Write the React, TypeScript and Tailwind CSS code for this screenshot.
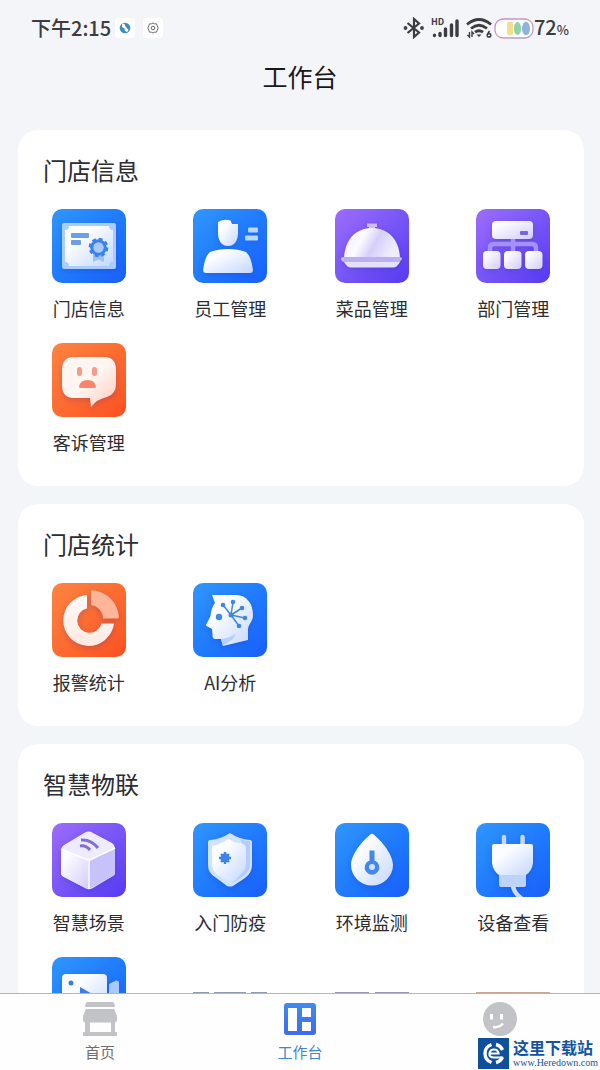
import React, {ReactNode} from 'react'

type Tone = 'blue' | 'purple' | 'orange'

interface Entry {
    label: string
    tone: Tone
    icon: ReactNode
}

const tones: Record<Tone, string> = {
    blue: 'bg-linear-to-br from-[#3096fd] to-[#1a5efb]',
    purple: 'bg-linear-to-br from-[#9d6cfb] to-[#5639f2]',
    orange: 'bg-linear-to-br from-[#fe8440] to-[#fb4f20]',
}

// shared gradients for the white shapes
function Gradients() {
    return (
        <svg width="0" height="0" className="absolute" aria-hidden="true">
            <defs>
                <linearGradient id="gBlue" x1="0" y1="0" x2="1" y2="1">
                    <stop offset="0.3" stopColor="#fcfdff"/>
                    <stop offset="1" stopColor="#c3d7fe"/>
                </linearGradient>
                <linearGradient id="gPurple" x1="0" y1="0" x2="1" y2="1">
                    <stop offset="0.2" stopColor="#fdfcff"/>
                    <stop offset="1" stopColor="#d3cbfd"/>
                </linearGradient>
                <linearGradient id="gOrange" x1="0" y1="0" x2="1" y2="1">
                    <stop offset="0.5" stopColor="#fff5f1"/>
                    <stop offset="1" stopColor="#ffc9b8"/>
                </linearGradient>
                <linearGradient id="gRing" x1="0" y1="0" x2="0" y2="1">
                    <stop offset="0" stopColor="#fffaf8"/>
                    <stop offset="1" stopColor="#ffe9e2"/>
                </linearGradient>
                <linearGradient id="gDome" x1="0" y1="0" x2="1" y2="0.3">
                    <stop offset="0" stopColor="#f1eeff"/>
                    <stop offset="0.4" stopColor="#fbfaff"/>
                    <stop offset="0.65" stopColor="#d6cffa"/>
                    <stop offset="1" stopColor="#efecff"/>
                </linearGradient>
                <linearGradient id="gTab" x1="0" y1="0" x2="0" y2="1">
                    <stop offset="0" stopColor="#3f8bee"/>
                    <stop offset="1" stopColor="#3f6bec"/>
                </linearGradient>
                <linearGradient id="gCell" x1="0" y1="0" x2="1" y2="1">
                    <stop offset="0" stopColor="#c08ad0"/>
                    <stop offset="0.5" stopColor="#d99bb0"/>
                    <stop offset="1" stopColor="#a79bd8"/>
                </linearGradient>
            </defs>
        </svg>
    )
}

const storeIcon = <>
    <rect x="10" y="14" width="54" height="46" rx="2" fill="#a9cdfe"/>
    <path d="M17 17H57A4 4 0 0 0 61 21V53A4 4 0 0 0 57 57H17A4 4 0 0 0 13 53V21A4 4 0 0 0 17 17Z" fill="url(#gBlue)"/>
    <rect x="19" y="24" width="18" height="5" rx="1" fill="#6b9fe6"/>
    <rect x="19" y="31" width="10" height="5" rx="1" fill="#6b9fe6"/>
    <path d="M41 45H52V53L46.500 50.500 41 53Z" fill="#9cc0fb"/>
    <circle cx="46.500" cy="38.500" r="8.300" fill="#3b82ec"/>
    <circle cx="46.500" cy="38.500" r="8.600" fill="none" stroke="#3b82ec" strokeWidth="2.500" strokeDasharray="3.800 2.950"/>
    <circle cx="46.500" cy="38.500" r="5.200" fill="#a9cbfb"/>
</>

const staffIcon = <>
    <path d="M25 13Q31 9.500 37.500 11.500L39 15 45 15V25Q44 37 35 37 26 37 25 25Z" fill="url(#gBlue)"/>
    <path d="M10 61Q12 47 17 43 25 40 35 40T53 43Q58 47 60 61 60 64 57 64H13Q10 64 10 61Z" fill="url(#gBlue)"/>
    <rect x="55" y="18.500" width="10" height="5" rx="1" fill="#b9d6fe"/>
    <rect x="52" y="26.500" width="13" height="5" rx="1" fill="#b9d6fe"/>
</>

const dishIcon = <>
    <path d="M32 14.500H42V18H40V21H34V18H32Z" fill="#cbbdfc"/>
    <path d="M6 49.500Q6 48 9 48H64Q67 48 67 49.500T64 53H9Q6 52 6 49.500Z" fill="#c9bcfb"/>
    <path d="M9 49C10 29 22 19 37 19S64 29 65 49Z" fill="url(#gDome)"/>
    <path d="M9 48H65V53H9Z" fill="#bdb0f2"/>
    <path d="M9 53H65Q62 58.500 58 58.500H16Q12 58.500 9 53Z" fill="#e6e0ff"/>
</>

const deptIcon = <>
    <path d="M37 30V43M14 43V39Q14 35 18 35H56Q60 35 60 39V43" fill="none" stroke="#a391fa" strokeWidth="4.500"/>
    <rect x="16" y="12" width="41" height="18" rx="4" fill="url(#gPurple)"/>
    <rect x="44" y="22" width="8" height="4" rx="1" fill="#7b63dc"/>
    <rect x="7" y="42" width="17.500" height="18" rx="4" fill="url(#gPurple)"/>
    <rect x="28" y="42" width="17.500" height="18" rx="4" fill="url(#gPurple)"/>
    <rect x="49" y="42" width="17.500" height="18" rx="4" fill="url(#gPurple)"/>
</>

const complaintIcon = <>
    <path d="M22 14H52Q64 14 64 27V41Q64 51 55 54 45 56 39 64L38 55H22Q10 55 10 42V27Q10 14 22 14Z" fill="url(#gOrange)"/>
    <rect x="25" y="24" width="5" height="9" rx="2.500" fill="#f79c84"/>
    <rect x="40" y="24" width="5" height="9" rx="2.500" fill="#f79c84"/>
    <path d="M27 44Q28 37 35.500 37T44 44Q44 45 42 45H29Q27 45 27 44Z" fill="#f6866c"/>
</>

const alarmIcon = <>
    <path d="M35 12V25.500A12.300 12.300 0 1 0 49.500 40.500H62A25.500 25.500 0 1 1 35 12Z" fill="url(#gRing)"/>
    <path d="M39 8.500Q39 7 41 7.200A29 29 0 0 1 67 34Q67 35.500 65 35.500H51A14 14 0 0 0 39 22Z" fill="#ffb597"/>
</>

const aiIcon = <>
    <path d="M19 12H43C54 12 60 21 60 32 60 39 55 41 55 47V57L30 63 28 56H22Q19 56 19.500 51L19 46 13.500 43Q12.500 42 14 40L17.500 33Q18 25 22 20Z" fill="url(#gBlue)"/>
    <path d="M28 56Q38 55 43 50L40 56 30 63Z" fill="#b5cefa"/>
    <circle cx="26" cy="34" r="3.200" fill="#3b8ae6"/>
    <path d="M38 32L30 22M38 32L40 19M38 32L49 25M38 32L52 35M38 32L46 43" stroke="#3f86df" strokeWidth="1.500"/>
    <g fill="#3f86df">
        <circle cx="38" cy="32" r="2.500"/><circle cx="30" cy="22" r="2.300"/>
        <circle cx="40" cy="19" r="2.300"/><circle cx="49" cy="25" r="2.300"/>
        <circle cx="52" cy="35" r="2.300"/><circle cx="46" cy="43" r="2.300"/>
    </g>
</>

const sceneIcon = <>
    <path d="M33 9.500Q37 7.500 41 10L60 20Q63 22 63 25V50Q63 52 60 53.500L40 65.500Q37 67 34 65.500L11 53.500Q9 52 9 50V27Q9 24 12 22Z" fill="#eeebff"/>
    <path d="M9 27L36.500 38V66.500L11 53.500Q9 52 9 50Z" fill="url(#gPurple)"/>
    <path d="M37.500 38L63 25V50Q63 52 60 53.500L37.500 66Z" fill="#c8c2fb"/>
    <path d="M9 26L37 37.500 63 25" fill="none" stroke="#fff" strokeWidth="1.500"/>
    <path d="M37 37V66" stroke="#f7f5ff" strokeWidth="1.500"/>
    <path d="M29 17Q39 16 46 25" fill="none" stroke="#7f70d2" strokeWidth="3"/>
    <path d="M28 23Q34 22 38 27" fill="none" stroke="#7f70d2" strokeWidth="3"/>
</>

const shieldIcon = <>
    <path d="M37 10Q46 16 57 17 59 17 59 20V42Q59 50 52 55L40 63Q37 64 34 63L22 54Q15 50 15 42V20Q15 17 17 17 28 16 37 10Z" fill="#cfe2ff"/>
    <path d="M47 16Q52 18 57 18V42Q56 50 49 54L37 62Q51 51 51 40V23Z" fill="#b3cdfc"/>
    <path d="M35 16Q42 20 50 21 53 22 53 25V40Q53 48 46 53L36 59 25 52Q19 48 19 40V23Q28 21 35 16Z" fill="url(#gBlue)"/>
    <circle cx="32" cy="35" r="4.500" fill="#3c84e6"/>
    <path d="M32 29V41M26 35H38M28 31L36 39M36 31L28 39" stroke="#3c84e6" strokeWidth="2.400"/>
</>

const dropIcon = <>
    <path d="M37 10.500C43 14 58 30 58 42A21 20.500 0 0 1 16 42C16 30 31 14 37 10.500Z" fill="url(#gBlue)"/>
    <path d="M34.500 27.500H39.500V37.500A7.300 7.300 0 1 1 34.500 37.500Z" fill="#4387ec"/>
    <circle cx="37" cy="44" r="3" fill="#cfe1fd"/>
</>

const plugIcon = <>
    <path d="M28 22V14M46.500 22V14" stroke="#bfd6fe" strokeWidth="4.500" strokeLinecap="round"/>
    <path d="M37 63Q38 70 46 76" fill="none" stroke="#c7dcff" strokeWidth="4.500"/>
    <path d="M23 50H50V62Q50 64 48 64H25Q23 64 23 62Z" fill="#bcd3fd"/>
    <path d="M18 21H55Q57 21 57 23V40Q56 48 50 52H23Q17 48 16 40V23Q16 21 18 21Z" fill="url(#gBlue)"/>
</>

const cameraIcon = <>
    <path d="M57 27L64 23.500Q67 23 67 26V50L57 46Z" fill="#a9c8fd"/>
    <rect x="10" y="17" width="45" height="42" rx="4" fill="url(#gBlue)"/>
    <circle cx="19" cy="26" r="2.500" fill="#3c7ce8"/>
    <path d="M28 30L42 38 28 46Z" fill="#3c7ce8"/>
</>

const sections: { title: string; items: Entry[] }[] = [
    {
        title: '门店信息',
        items: [
            {label: '门店信息', tone: 'blue', icon: storeIcon},
            {label: '员工管理', tone: 'blue', icon: staffIcon},
            {label: '菜品管理', tone: 'purple', icon: dishIcon},
            {label: '部门管理', tone: 'purple', icon: deptIcon},
            {label: '客诉管理', tone: 'orange', icon: complaintIcon},
        ],
    },
    {
        title: '门店统计',
        items: [
            {label: '报警统计', tone: 'orange', icon: alarmIcon},
            {label: 'AI分析', tone: 'blue', icon: aiIcon},
        ],
    },
    {
        title: '智慧物联',
        items: [
            {label: '智慧场景', tone: 'purple', icon: sceneIcon},
            {label: '入门防疫', tone: 'blue', icon: shieldIcon},
            {label: '环境监测', tone: 'blue', icon: dropIcon},
            {label: '设备查看', tone: 'blue', icon: plugIcon},
        ],
    },
]

function Tile({tone, icon}: { tone: Tone; icon: ReactNode }) {
    return (
        <span className={`block size-[74px] rounded-[10px] overflow-hidden ${tones[tone]}`}>
            <svg viewBox="0 0 74 74" className="size-full drop-shadow-[0_2px_3px_rgba(20,20,160,0.2)]">{icon}</svg>
        </span>
    )
}

function Section({title, items, children}: { title: string; items: Entry[]; children?: ReactNode }) {
    return (
        <section className="bg-white rounded-[20px] pt-[22px] pb-[30px] shrink-0">
            <h2 className="px-[25px] mb-[21px] text-2xl leading-9 text-[#2c2c31]">{title}</h2>
            <div className="grid grid-cols-4 gap-y-[21px]">
                {items.map((item) => (
                    <button key={item.label} className="flex flex-col items-center gap-[11px]">
                        <Tile tone={item.tone} icon={item.icon}/>
                        <span className="text-lg leading-7 text-[#2c2c31]">{item.label}</span>
                    </button>
                ))}
                {children}
            </div>
        </section>
    )
}

function StatusBar() {
    return (
        <div className="h-14 flex items-center justify-between px-[31px] text-[#3c3d40]">
            <div className="flex items-center">
                <span className="text-xl leading-7 font-medium">下午2:15</span>
                <span className="ml-1 size-5 bg-white rounded-sm flex items-center justify-center">
                    <svg width="12" height="12" viewBox="0 0 12 12">
                        <circle cx="6" cy="6" r="5.300" fill="#3f8cc4"/>
                        <path d="M3 1.500L5.500 2 6.500 4.500 9.500 8 8 10 6 9 5.500 6.500 3 5Z" fill="#fff"/>
                    </svg>
                </span>
                <span className="ml-2 size-5 bg-white rounded-sm flex items-center justify-center">
                    <svg width="12" height="12" viewBox="0 0 12 12" fill="none" stroke="#6a6a6a">
                        <path d="M6 1L7.500 1.800 9.500 1.900 10.200 3.800 11.200 6 10.200 8.200 9.500 10.100 7.500 10.200 6 11 4.500 10.200 2.500 10.100 1.800 8.200.8 6 1.800 3.800 2.500 1.900 4.500 1.800Z"/>
                        <circle cx="6" cy="6" r="1.800"/>
                    </svg>
                </span>
            </div>
            <div className="flex items-center">
                <svg width="22" height="22" viewBox="0 0 22 22" fill="none" stroke="currentColor" strokeWidth="2.200">
                    <path d="M4.500 6L16 15.500 11 20V2L16 6.500 4.500 16"/>
                    <circle cx="2.500" cy="11" r=".8"/><circle cx="19" cy="11" r=".8"/>
                </svg>
                <span className="relative ml-[6px]">
                    <svg width="29" height="22" viewBox="0 0 29 22" stroke="currentColor" strokeWidth="3.400" strokeLinecap="round">
                        <path d="M3.500 18.500V18.300M9 18.500V16.500M14.500 18.500V12M20.500 18.500V8M26 18.500V4"/>
                    </svg>
                    <span className="absolute left-0 top-0 text-[9px] leading-[10px] font-bold">HD</span>
                </span>
                <svg className="ml-[5px]" width="29" height="22" viewBox="0 0 29 22" fill="none" stroke="currentColor" strokeWidth="2.800">
                    <path d="M2 7.500Q14 -2.500 26 7.500"/>
                    <path d="M6 11.500Q14 5 22 11.500"/>
                    <path d="M10 15.200Q14 12.200 18 15.200"/>
                    <path d="M11.500 17.500H16.500L14 20Z" fill="currentColor" stroke="none"/>
                    <path d="M4.500 15V20L2.500 18M7 20V15L9 17" strokeWidth="1.400"/>
                    <path d="M24.500 14L22.500 17.500" strokeWidth="1.600"/>
                    <circle cx="24" cy="18.300" r="1.800" strokeWidth="1.500"/>
                </svg>
                <svg width="40" height="22" viewBox="0 0 40 22">
                    <rect x="1" y="2" width="38" height="19" rx="8" fill="#fff" stroke="url(#gCell)" strokeWidth="1.300"/>
                    <rect x="13" y="5" width="6" height="13" rx="2" fill="#f6dc8e"/>
                    <ellipse cx="23.500" cy="11.500" rx="3.700" ry="6.500" fill="#8fd3ae"/>
                    <ellipse cx="32" cy="11.500" rx="4" ry="6.800" fill="#8db4dc"/>
                </svg>
                <span className="text-xl leading-7 font-medium">72<span className="text-[13px]">%</span></span>
            </div>
        </div>
    )
}

const homeTab = (
    <svg width="34" height="34" viewBox="0 0 34 34" fill="#c2c3c7">
        <path d="M5 0H29Q31 0 31.500 2L32 5H2L2.500 2Q3 0 5 0Z"/>
        <path d="M3 7H31L34 14V18Q34 20 32 20.500V30H33Q34 30 34 31V34H0V31Q0 30 1 30H2V20.500Q0 20 0 18V14ZM7 20.500V30H28V20.500Z" fillRule="evenodd"/>
    </svg>
)

const benchTab = (
    <svg width="34" height="34" viewBox="0 0 34 34">
        <path fillRule="evenodd" fill="url(#gTab)" d="M4 1H30Q33 1 33 4V30Q33 33 30 33H4Q1 33 1 30V4Q1 1 4 1ZM5 6V29H14V6ZM19 6V15H28V6ZM19 20V29H28V20Z"/>
    </svg>
)

const mineTab = (
    <svg width="34" height="34" viewBox="0 0 34 34">
        <circle cx="17" cy="17" r="17" fill="#c2c3c7"/>
        <path d="M8.500 12V17.500M18.500 12V17.500" stroke="#fff" strokeWidth="3"/>
        <path d="M10 25Q16 26 20 21.500" fill="none" stroke="#fff" strokeWidth="2.500"/>
    </svg>
)

export default function App() {
    return (
        <div className="relative h-screen flex flex-col overflow-hidden bg-[#f4f5f8] font-['Noto_Sans_CJK_SC',sans-serif]">
            <Gradients/>
            <StatusBar/>
            <h1 className="text-center text-[25px] leading-10 text-[#18181a]">工作台</h1>

            <main className="flex-1 min-h-0 overflow-hidden flex flex-col gap-[18px] pt-[34px] pl-[18px] pr-4">
                <Section title={sections[0].title} items={sections[0].items}/>
                <Section title={sections[1].title} items={sections[1].items}/>
                <Section title={sections[2].title} items={sections[2].items}>
                    <button className="flex flex-col items-center" aria-label="camera">
                        <Tile tone="blue" icon={cameraIcon}/>
                    </button>
                    {/* top edges of what is still under the tab bar */}
                    <div className="pt-[35px] flex justify-center gap-[5px]">
                        <span className="w-4 h-[2px] bg-[#8f9bb5]"/>
                        <span className="w-8 h-[2px] bg-[#8f9bb5]"/>
                        <span className="w-4 h-[2px] bg-[#8f9bb5]"/>
                    </div>
                    <div className="pt-[35px] flex justify-center gap-[6px]">
                        <span className="w-[34px] h-[2px] bg-[#9795b8]"/>
                        <span className="w-[34px] h-[2px] bg-[#9795b8]"/>
                    </div>
                    <div className="pt-[35px] flex justify-center">
                        <span className="w-[74px] h-[2px] bg-[#c9a597]"/>
                    </div>
                </Section>
            </main>

            {/* tab bar */}
            <nav className="h-[77px] shrink-0 grid grid-cols-3 bg-[#fefefe] border-t border-[#b5b5b8]">
                <a href="#" className="flex flex-col items-center gap-1 pt-2 text-[15px] leading-6 text-[#6d6e72]">
                    {homeTab}
                    <span>首页</span>
                </a>
                <a href="#" className="flex flex-col items-center gap-1 pt-2 text-[15px] leading-6 text-[#3c87cf]">
                    {benchTab}
                    <span>工作台</span>
                </a>
                <a href="#" className="flex flex-col items-center pt-2" aria-label="mine">
                    {mineTab}
                </a>
            </nav>

            <div className="absolute right-0 bottom-0 h-[34px] flex items-center gap-1 bg-[#fefefe] text-[#14549f]">
                <svg width="31" height="31" viewBox="0 0 31 31">
                    <rect width="31" height="31" fill="#0e509c"/>
                    <path d="M13.500 6.500A9.500 9.500 0 0 0 13.500 24.500M18 6.500A9.500 9.500 0 0 1 24.500 12M18 24.500A9.500 9.500 0 0 0 24.500 19" fill="none" stroke="#fff" strokeWidth="3.400"/>
                    <path d="M11.500 15.500H20.500Q20 11.500 16 11.500T11.500 15.500 16 19.500H25" fill="none" stroke="#fff" strokeWidth="2.200"/>
                </svg>
                <div className="pr-[2px]">
                    <p className="text-base leading-5 font-bold">这里下载站</p>
                    <p className="text-[10px] leading-3 font-['Liberation_Serif',serif]">www.Heredown.com</p>
                </div>
            </div>
        </div>
    )
}
